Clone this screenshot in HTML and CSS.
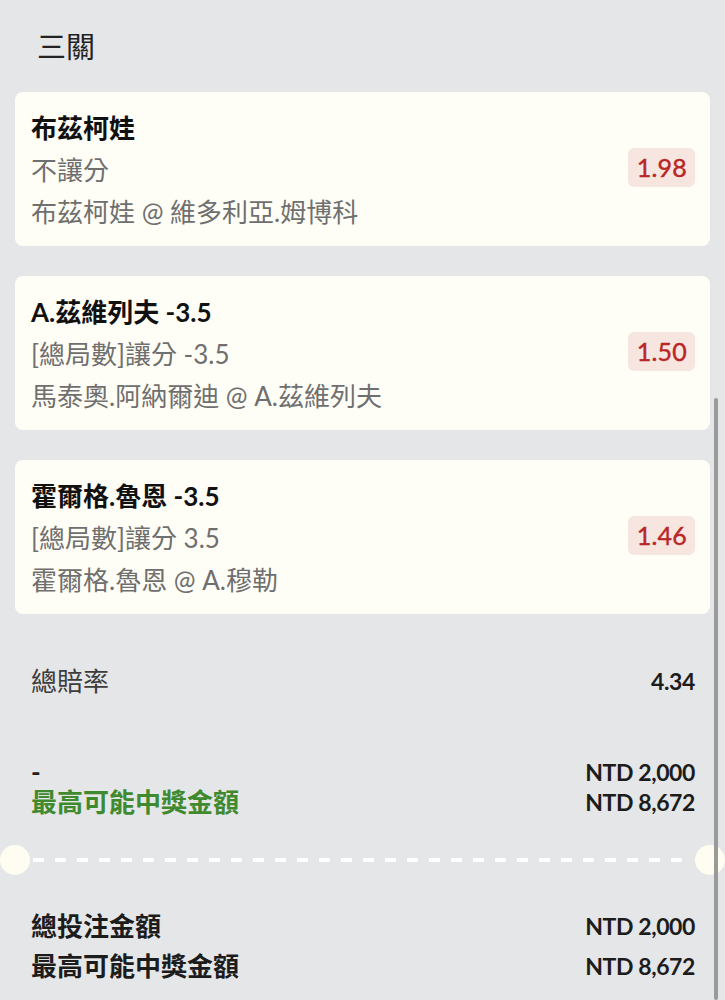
FILE: index.html
```html
<!DOCTYPE html>
<html lang="zh-Hant">
<head>
  <meta charset="UTF-8">
  <meta name="viewport" content="width=device-width, initial-scale=1.0">
  <title>三關</title>
  <link rel="stylesheet" href="styles.css">
</head>
<body>
  <div class="container">
    <h2 class="title">三關</h2>

    <div class="bet-list">
      <div class="bet-card">
        <div class="bet-info">
          <div class="bet-name">布茲柯娃</div>
          <div class="bet-line">不讓分</div>
          <div class="bet-line">布茲柯娃 @ 維多利亞.姆博科</div>
        </div>
        <div class="odds">1.98</div>
      </div>

      <div class="bet-card">
        <div class="bet-info">
          <div class="bet-name">A.茲維列夫 -3.5</div>
          <div class="bet-line">[總局數]讓分 -3.5</div>
          <div class="bet-line">馬泰奧.阿納爾迪 @ A.茲維列夫</div>
        </div>
        <div class="odds">1.50</div>
      </div>

      <div class="bet-card">
        <div class="bet-info">
          <div class="bet-name">霍爾格.魯恩 -3.5</div>
          <div class="bet-line">[總局數]讓分 3.5</div>
          <div class="bet-line">霍爾格.魯恩 @ A.穆勒</div>
        </div>
        <div class="odds">1.46</div>
      </div>
    </div>

    <div class="summary">
      <div class="row total-odds">
        <span class="label">總賠率</span>
        <span class="value">4.34</span>
      </div>

      <div class="stake-block">
        <div class="row">
          <span class="dash">-</span>
          <span class="value">NTD 2,000</span>
        </div>
        <div class="row">
          <span class="win">最高可能中獎金額</span>
          <span class="value">NTD 8,672</span>
        </div>
      </div>
    </div>

    <div class="divider">
      <span class="notch"></span>
      <span class="dashes"></span>
      <span class="notch"></span>
    </div>

    <div class="summary totals">
      <div class="row">
        <span>總投注金額</span>
        <span class="value">NTD 2,000</span>
      </div>
      <div class="row">
        <span>最高可能中獎金額</span>
        <span class="value">NTD 8,672</span>
      </div>
    </div>
  </div>

  <div class="scrollbar"></div>
</body>
</html>
```

FILE: styles.css
```css
body {
  margin: 0;
  padding: 0 15px;
  background-color: #e5e6e8;
  font-family: Lato, "Noto Sans CJK TC", sans-serif;
  color: #1f1f1f;
  overflow: hidden;
}
.title {
  margin: 0 0 28px;
  padding: 30px 0 0 22px;
  font-size: 29px;
  line-height: 34px;
  font-weight: normal;
  color: #222;
}
.bet-list {
  display: flex;
  flex-direction: column;
  gap: 30px;
}
.bet-card {
  display: flex;
  align-items: center;
  justify-content: space-between;
  padding: 15px 15px 13px 16px;
  background-color: #fffef6;
  border-radius: 8px;
}
.bet-info {
  font-size: 26px;
  line-height: 42px;
}
.bet-name {
  font-weight: bold;
  color: #111;
}
.bet-line {
  color: #6f6f6f;
}
.odds {
  margin-top: -6px;
  padding: 0 8px 0 9px;
  height: 39px;
  line-height: 39px;
  font-size: 25px;
  letter-spacing: 0.2px;
  color: #b82626;
  background-color: #f7e5df;
  border-radius: 6px;
  -webkit-text-stroke: 0.4px #b82626;
}
.summary {
  padding: 0 15px 0 16px;
  font-size: 26px;
}
.row {
  display: flex;
  justify-content: space-between;
}
.total-odds {
  margin-top: 47px;
  line-height: 40px;
}
.total-odds .label {
  color: #3c3c3c;
}
.value {
  font-size: 23px;
  font-weight: bold;
  letter-spacing: -0.4px;
  color: #1c1c1c;
}
.stake-block {
  margin-top: 56px;
  line-height: 30px;
}
.dash {
  font-weight: bold;
}
.win {
  font-weight: bold;
  color: #3f8a2e;
}
.divider {
  display: flex;
  align-items: center;
  margin: 28px -15px 0;
  height: 30px;
}
.notch {
  width: 30px;
  height: 30px;
  border-radius: 50%;
  background-color: #fffdf1;
}
.dashes {
  flex: 1;
  height: 4px;
  margin: 0 3px;
  background: repeating-linear-gradient(to right, #fff 0 11px, transparent 11px 22px);
}
.totals {
  margin-top: 31px;
  line-height: 40px;
  font-weight: bold;
  color: #1c1c1c;
}
.scrollbar {
  position: fixed;
  top: 398px;
  bottom: 0;
  right: 7px;
  width: 4px;
  background-color: #9a9a9a;
  border-radius: 2px;
}
```
